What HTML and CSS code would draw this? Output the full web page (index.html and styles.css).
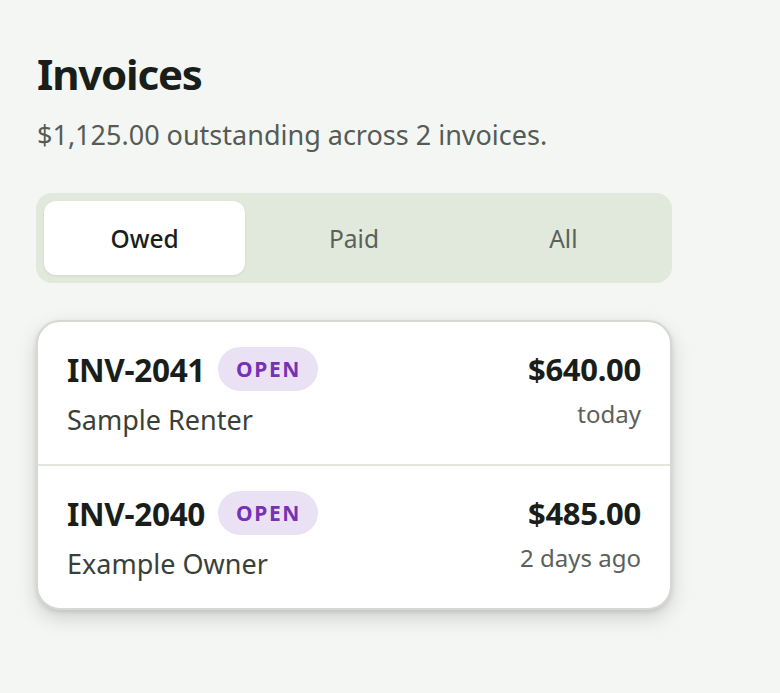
FILE: index.html
```html
<!DOCTYPE html>
<html>
<head>
<meta charset="utf-8">
<link rel="stylesheet" href="styles.css">
</head>
<body>
<main class="page">
  <h1 class="title">Invoices</h1>
  <p class="subtitle">$1,125.00 outstanding across 2 invoices.</p>
  <div class="tabs">
    <div class="tab active">Owed</div>
    <div class="tab">Paid</div>
    <div class="tab">All</div>
  </div>
  <div class="card">
    <div class="row">
      <div class="row-top">
        <div class="id-group">
          <span class="inv-id">INV-2041</span>
          <span class="badge">OPEN</span>
        </div>
        <span class="amount">$640.00</span>
      </div>
      <div class="row-bottom">
        <span class="name">Sample Renter</span>
        <span class="when">today</span>
      </div>
    </div>
    <div class="row">
      <div class="row-top">
        <div class="id-group">
          <span class="inv-id">INV-2040</span>
          <span class="badge">OPEN</span>
        </div>
        <span class="amount">$485.00</span>
      </div>
      <div class="row-bottom">
        <span class="name">Example Owner</span>
        <span class="when">2 days ago</span>
      </div>
    </div>
  </div>
</main>
</body>
</html>
```
FILE: styles.css
```css
* { box-sizing: border-box; }
html {
  background: #f4f6f3;
  min-height: 100%;
}
body {
  margin: 0;
  padding: 0;
  min-height: 100vh;
  background: #f4f6f3;
  font-family: "Noto Sans", "Open Sans", sans-serif;
  color: #1b1f1b;
}
.page {
  width: 636px;
  margin-left: 36px;
  padding-top: 48px;
}
.title {
  margin: 0 0 0 1px;
  font-size: 42px;
  font-weight: 700;
  letter-spacing: -1.2px;
  line-height: 52px;
  color: #1a1e1a;
}
.subtitle {
  margin: 17px 0 0 1px;
  font-size: 27px;
  line-height: 36px;
  color: #555b55;
}
.tabs {
  margin-top: 40px;
  height: 90px;
  background: #e1e8dc;
  border-radius: 16px;
  padding: 8px;
  display: grid;
  grid-template-columns: 1fr 1fr 1fr;
  gap: 8px;
}
.tab {
  display: flex;
  align-items: center;
  justify-content: center;
  font-size: 24.5px;
  color: #5a605a;
  border-radius: 12px;
}
.tab.active {
  background: #ffffff;
  color: #1a1e1a;
  font-weight: 500;
  box-shadow: 0 1px 3px rgba(0,0,0,0.08);
}
.card {
  margin-top: 37px;
  background: #fff;
  border: 2px solid #d6d8d4;
  border-radius: 24px;
  box-shadow: 0 8px 20px rgba(0,0,0,0.15), 0 2px 5px rgba(0,0,0,0.10);
  overflow: hidden;
}
.row {
  padding: 25px 29px 0 29px;
  height: 142px;
}
.row + .row {
  border-top: 2px solid #e3e6dc;
  height: 144px;
}
.row-top {
  display: flex;
  align-items: center;
  justify-content: space-between;
  height: 44px;
}
.id-group {
  display: flex;
  align-items: center;
  gap: 13px;
}
.inv-id {
  font-size: 31.5px;
  font-weight: 700;
  letter-spacing: -0.3px;
  color: #1a1e1a;
}
.badge {
  background: #ebe1f5;
  color: #7631b5;
  font-size: 21px;
  font-weight: 700;
  letter-spacing: 1.6px;
  height: 44px;
  padding: 0 17px 0 18px;
  border-radius: 22px;
  display: flex;
  align-items: center;
}
.amount {
  font-size: 31px;
  font-weight: 700;
  letter-spacing: -0.3px;
  color: #1a1e1a;
}
.row-bottom {
  display: flex;
  justify-content: space-between;
  align-items: flex-start;
  margin-top: 11px;
}
.name {
  font-size: 27px;
  color: #3a3f3a;
  line-height: 36px;
}
.when {
  font-size: 24px;
  color: #5b605b;
  line-height: 32px;
  margin-top: -4px;
}
```
